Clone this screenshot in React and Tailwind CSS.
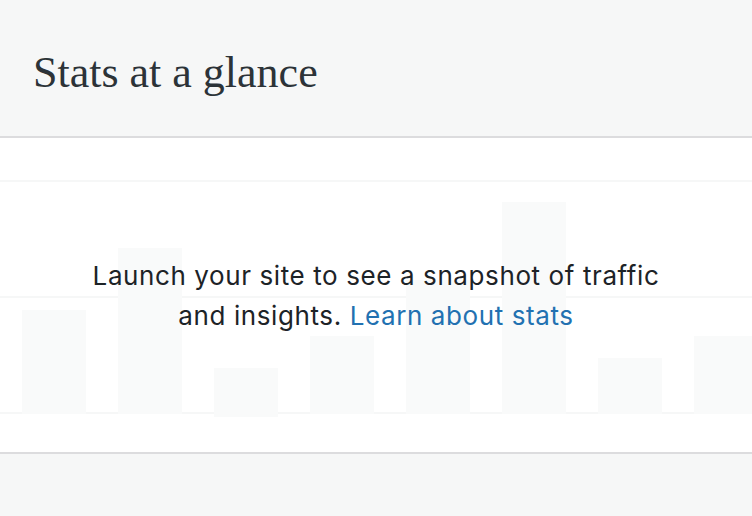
export default function App() {
  const bars = [
    { h: 104, cls: "" },
    { h: 166, cls: "" },
    { h: 49, cls: "mb-[-3px]" },
    { h: 78, cls: "" },
    { h: 134, cls: "" },
    { h: 212, cls: "" },
    { h: 56, cls: "" },
    { h: 78, cls: "" },
  ];
  return (
    <div className="w-[752px] h-[516px] bg-[#f6f7f7] flex flex-col overflow-hidden">
      <div className="h-[138px] shrink-0 flex items-start pl-[33px] pt-[51px] border-b-2 border-[#dcdcde]">
        <h1
          className="text-[44px] leading-[44px] text-[#2c3338]"
          style={{ fontFamily: '"Liberation Serif", serif' }}
        >
          Stats at a glance
        </h1>
      </div>
      <div className="relative h-[316px] shrink-0 bg-white border-b-2 border-[#dcdcde] grid">
        <div className="col-start-1 row-start-1 flex flex-col pt-[42px] gap-[114px]">
          <div className="h-[2px] bg-[#f6f7f7]" />
          <div className="h-[2px] bg-[#f6f7f7]" />
          <div className="h-[2px] bg-[#f6f7f7]" />
        </div>
        <div className="col-start-1 row-start-1 h-[276px] flex items-end pl-[22px] gap-[32px]">
          {bars.map((b, i) => (
            <div
              key={i}
              className={`w-[64px] shrink-0 bg-[#f9fafa] ${b.cls}`}
              style={{ height: b.h }}
            />
          ))}
        </div>
        <div className="absolute inset-x-0 top-[118px] flex justify-center">
          <p
            className="text-center text-[26px] leading-[40px] text-[#1d2327] tracking-[0.6px]"
            style={{ fontFamily: 'Inter, "Noto Sans", sans-serif' }}
          >
            Launch your site to see a snapshot of traffic
            <br />
            and insights. <a className="text-[#2271b1]">Learn about stats</a>
          </p>
        </div>
      </div>
      <div className="flex-1 bg-[#f6f7f7]" />
    </div>
  );
}
